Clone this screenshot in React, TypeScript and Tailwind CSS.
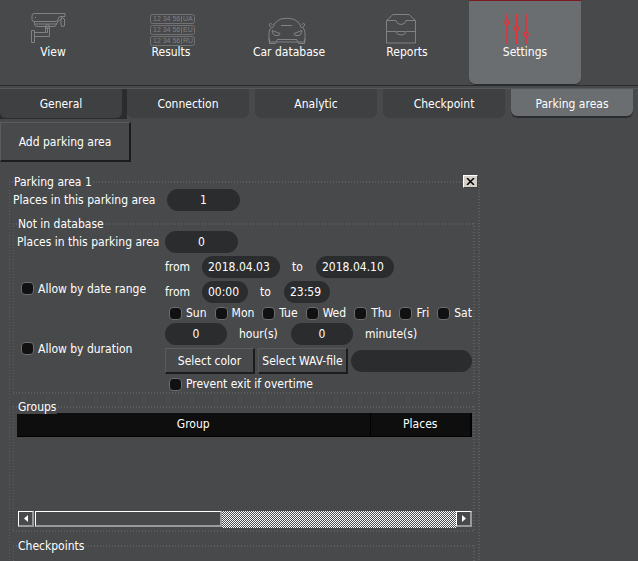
import React, { useState } from "react";
import clsx from "clsx";

const DAYS = ["Sun", "Mon", "Tue", "Wed", "Thu", "Fri", "Sat"];

const TABS = ["Connection", "Analytic", "Checkpoint", "Parking areas"];

const CameraIcon = () => (
  <svg width="36" height="32" viewBox="0 0 36 32" fill="none" stroke="#808284">
    <path d="M3 .500h31v3h-4q-3 0-3 3 0 2-3 2H3q-2 0-2-2V3q0-2.500 2-2.500zM4 4.500h1" />
    <path d="M3.500 8.500v2q0 3 2.500 3h18l3-5 3-2.500M30.500 4.500l3 1.500v7l-3 .500q-1.500-4.500 0-9zM4 11h22" />
    <path d="M14.500 13.500v6h-11M18.500 15v8.500h-15M14.500 19.500h2v-5" />
    <circle cx="16.500" cy="13.500" r="2" />
    <path d="M.500 17.500h3v12h-3z" />
  </svg>
);

const PlatesIcon = () => (
  <svg
    width="46"
    height="34"
    viewBox="0 0 46 34"
    fill="none"
    stroke="#707274"
    className="font-['Liberation_Sans_Narrow','Liberation_Sans',sans-serif] text-[7px]"
  >
    {["UA", "EU", "RU"].map((code, i) => (
      <g key={code} transform={`translate(0 ${i * 11})`}>
        <rect x="0.5" y="1.5" width="44" height="9" rx="2" />
        <path d="M31.500 3v6" />
        <text x="3" y="8" fill="#808284" stroke="none">12 34 56</text>
        <text x="33" y="8" fill="#808284" stroke="none">{code}</text>
      </g>
    ))}
  </svg>
);

const CarIcon = () => (
  <svg width="38" height="28" viewBox="0 0 38 28" fill="none" stroke="#808284">
    <path d="M4.500 11L7 6q3-3 6-4 6-1.500 12 0 3 1 6 4l2.500 5M4.500 8l-2-2-1.500 2 2 2M33.500 8l2-2 1.500 2-2 2" />
    <path d="M3.500 10Q1 13 1 16v8q0 1 1 1h34q1 0 1-1v-8q0-3-2.500-6M13 8.500h11" />
    <path d="M4 13.500l8 3q0 2-2 2H7q-2 0-3-5zM34 13.500l-8 3q0 2 2 2h3q2 0 3-5z" />
    <path d="M9 22.500h20M1.500 22v4.500h6l2-4M36.500 22v4.500h-6l-2-4" />
  </svg>
);

const DrawersIcon = () => (
  <svg width="32" height="31" viewBox="0 0 32 31" fill="none" stroke="#808284">
    <path d="M1.500 7.500L8 1.500h16l6.500 6v22.500h-29z" />
    <path d="M1.500 7.500H11q.500 4 5 4t5-4h9.500M1.500 18.500H11q.500 3.500 5 3.500t5-3.500h9.500M11.500 18.500h9" />
  </svg>
);

const SlidersIcon = () => (
  <svg width="26" height="32" viewBox="0 0 26 32" fill="none" stroke="#e53238" strokeWidth="1.5">
    <path d="M3 1v6M3 12v19M12.500 1v12M12.500 18v13M22 1v18M22 24v7" />
    <circle cx="3" cy="9.500" r="2" />
    <circle cx="12.500" cy="15.500" r="2" />
    <circle cx="22" cy="21.500" r="2" />
  </svg>
);

const NAV = [
  { label: "View", icon: <CameraIcon />, shift: "pr-2" },
  { label: "Results", icon: <PlatesIcon />, shift: "pl-1" },
  { label: "Car database", icon: <CarIcon />, shift: "pt-1 pr-1" },
  { label: "Reports", icon: <DrawersIcon />, shift: "pr-3" },
  { label: "Settings", icon: <SlidersIcon />, shift: "pr-4" },
];

interface GroupBoxProps {
  title: string;
  className?: string;
  children?: React.ReactNode;
}

// top, bottom, left and right edges, each a row of small ticks
const FRAME =
  "border border-transparent bg-origin-border bg-no-repeat [background-image:repeating-linear-gradient(90deg,#5b5c5e_0_1px,transparent_1px_3px),repeating-linear-gradient(90deg,#5b5c5e_0_1px,transparent_1px_3px),repeating-linear-gradient(#5b5c5e_0_1px,transparent_1px_3px),repeating-linear-gradient(#5b5c5e_0_1px,transparent_1px_3px)] [background-position:0_0,0_100%,0_0,100%_0] [background-size:100%_2px,100%_2px,1px_100%,2px_100%]";

// Group box with a dotted frame, the title sits on the top edge
const GroupBox: React.FC<GroupBoxProps> = ({ title, className, children }) => (
  <section className={clsx("relative", FRAME, className)}>
    <h2 className="absolute -top-[7px] left-[3px] bg-[#48494b] px-px leading-[14px]">{title}</h2>
    {children}
  </section>
);

interface PillProps {
  label: string;
  defaultValue: string;
  className: string;
}

const Pill: React.FC<PillProps> = ({ label, defaultValue, className }) => (
  <input
    aria-label={label}
    defaultValue={defaultValue}
    className={clsx("h-[22px] rounded-full bg-[#2b2c2e] outline-none", className)}
  />
);

const Check: React.FC<{ label: string }> = ({ label }) => (
  <label className="flex items-center gap-1 whitespace-nowrap">
    <input
      type="checkbox"
      className="size-[13px] shrink-0 appearance-none rounded-[4px] border border-[#6b6d6f] bg-[#111112] checked:bg-[#e53238]"
    />
    {label}
  </label>
);

const RAISED =
  "border-t border-l border-r-2 border-b-2 border-t-[#5a5b5d] border-l-[#5a5b5d] border-r-[#1c1c1d] border-b-[#1c1c1d]";

const BEVEL = "border-t border-l border-r-2 border-b-2 border-t-white border-l-white border-r-[#9a9a9a] border-b-[#9a9a9a]";

const App: React.FC = () => {
  const [page, setPage] = useState("Settings");
  const [tab, setTab] = useState("Parking areas");

  return (
    <div className="h-screen overflow-hidden bg-[#48494b] font-['DejaVu_Sans_Condensed','DejaVu_Sans',sans-serif] text-[12px] leading-4 text-white">
      <nav className="-ml-[3px] flex gap-1.5 border-b border-[#2b2c2d]">
        {NAV.map(({ label, icon, shift }) => (
          <button
            key={label}
            type="button"
            onClick={() => setPage(label)}
            className={clsx(
              "flex h-[85px] w-28 shrink-0 flex-col items-center border-t pt-3",
              page === label
                ? "rounded-b-md border-t-[#7a1a1e] bg-[#6b6e71] shadow-[inset_0_-1px_#2b2c2d]"
                : "border-t-transparent"
            )}
          >
            <span className={clsx("flex h-[31px] items-start", shift)}>{icon}</span>
            <span>{label}</span>
          </button>
        ))}
      </nav>

      <div className="mt-0.5 flex gap-1.5 border-t border-[#57585a]">
        <div className="-mr-1.5 shrink-0 bg-[#2b2c2e] pr-[5px] pb-px">
          <button
            type="button"
            onClick={() => setTab("General")}
            className={clsx("h-[29px] w-[122px] rounded-b-md", tab === "General" ? "bg-[#6b6e71]" : "bg-[#3f4042]")}
          >
            General
          </button>
        </div>
        {TABS.map((name) => (
          <button
            key={name}
            type="button"
            onClick={() => setTab(name)}
            className={clsx(
              "h-[29px] w-[122px] shrink-0 rounded-b-md",
              tab === name ? "bg-[#6b6e71] shadow-[inset_0_-2px_#2b2c2e]" : "bg-[#3f4042]"
            )}
          >
            {name}
          </button>
        ))}
      </div>

      <button type="button" className={clsx("mt-[3px] block h-10 w-[131px]", RAISED)}>
        Add parking area
      </button>

      <GroupBox title="Parking area 1" className="mt-[19px] ml-[9px] max-w-[471px] pt-[7px] pr-1 pb-4 pl-[3px]">
        <button
          type="button"
          aria-label="Remove parking area"
          className="absolute -top-[7px] right-px flex h-[13px] w-[15px] items-center justify-center border border-t-white border-r-[#404040] border-b-[#404040] border-l-white bg-[#d4d0c8]"
        >
          <svg width="9" height="7" viewBox="0 0 9 7" stroke="#000" strokeWidth="1.5">
            <path d="M1 0l7 7M8 0L1 7" />
          </svg>
        </button>

        <div className="flex items-center">
          <span className="w-[154px]">Places in this parking area</span>
          <Pill label="Places in this parking area" defaultValue="1" className="w-[73px] text-center" />
        </div>

        <GroupBox title="Not in database" className="mt-3 pt-[7px] pr-0.5 pb-px pl-[3px]">
          <div className="flex items-center">
            <span className="w-[148px]">Places in this parking area</span>
            <Pill label="Places not in database" defaultValue="0" className="w-[73px] text-center" />
          </div>

          <div className="mt-[3px] grid grid-cols-[144px_minmax(0,1fr)] items-center pl-1">
            <Check label="Allow by date range" />
            <div>
              <div className="flex items-center">
                <span className="w-[37px]">from</span>
                <Pill label="Date from" defaultValue="2018.04.03" className="w-[78px] px-1.5" />
                <span className="w-9 pl-3">to</span>
                <Pill label="Date to" defaultValue="2018.04.10" className="w-[78px] px-1.5" />
              </div>
              <div className="mt-[3px] flex items-center">
                <span className="w-[37px]">from</span>
                <Pill label="Time from" defaultValue="00:00" className="w-[46px] px-1.5" />
                <span className="w-9 pl-3">to</span>
                <Pill label="Time to" defaultValue="23:59" className="w-[46px] px-1.5" />
              </div>
              <div className="mt-0.5 flex justify-between pl-1">
                {DAYS.map((day) => (
                  <Check key={day} label={day} />
                ))}
              </div>
            </div>
          </div>

          <div className="mt-0.5 grid grid-cols-[144px_minmax(0,1fr)] items-center pl-1">
            <Check label="Allow by duration" />
            <div>
              <div className="flex items-center">
                <Pill label="Hours" defaultValue="0" className="w-[62px] text-center" />
                <span className="w-16 pl-3">hour(s)</span>
                <Pill label="Minutes" defaultValue="0" className="w-[62px] text-center" />
                <span className="pl-3">minute(s)</span>
              </div>
              <div className="mt-[3px] flex items-center gap-[3px]">
                <button type="button" className={clsx("h-[26px] w-[90px] shrink-0 whitespace-nowrap", RAISED)}>
                  Select color
                </button>
                <button type="button" className={clsx("h-[26px] w-[90px] shrink-0 whitespace-nowrap", RAISED)}>
                  Select WAV-file
                </button>
                <Pill label="WAV-file" defaultValue="" className="w-0 flex-1 px-2" />
              </div>
            </div>
            <div className="col-start-2 mt-0.5 pl-1">
              <Check label="Prevent exit if overtime" />
            </div>
          </div>
        </GroupBox>

        <GroupBox title="Groups" className="mt-3 pt-[6px] pr-0.5 pb-[3px] pl-[3px]">
          <table className="w-full table-fixed bg-[#0e0e0f]">
            <thead>
              <tr className="h-[23px] border-b border-black">
                <th className="w-[353px] border-r border-black font-normal">Group</th>
                <th className="border-r-2 border-black font-normal">Places</th>
              </tr>
            </thead>
          </table>
          <div className="mt-[74px] flex h-[17px] items-center pl-px">
            <button type="button" aria-label="Scroll left" className={clsx("flex size-4 items-center justify-center", BEVEL)}>
              <svg width="4" height="7" viewBox="0 0 4 7" fill="#fff"><path d="M4 0v7L0 3.500z" /></svg>
            </button>
            <div className={clsx("ml-px h-4 w-[187px]", BEVEL)} />
            <div className="h-[17px] flex-1 bg-[conic-gradient(#fff_25%,transparent_0_50%,#fff_0_75%,transparent_0)] bg-size-[2px_2px]" />
            <button type="button" aria-label="Scroll right" className={clsx("flex size-4 items-center justify-center", BEVEL)}>
              <svg width="4" height="7" viewBox="0 0 4 7" fill="#fff"><path d="M0 0v7l4-3.500z" /></svg>
            </button>
          </div>
        </GroupBox>

        <GroupBox title="Checkpoints" className="mt-[13px] h-20" />
      </GroupBox>
    </div>
  );
};

export default App;
